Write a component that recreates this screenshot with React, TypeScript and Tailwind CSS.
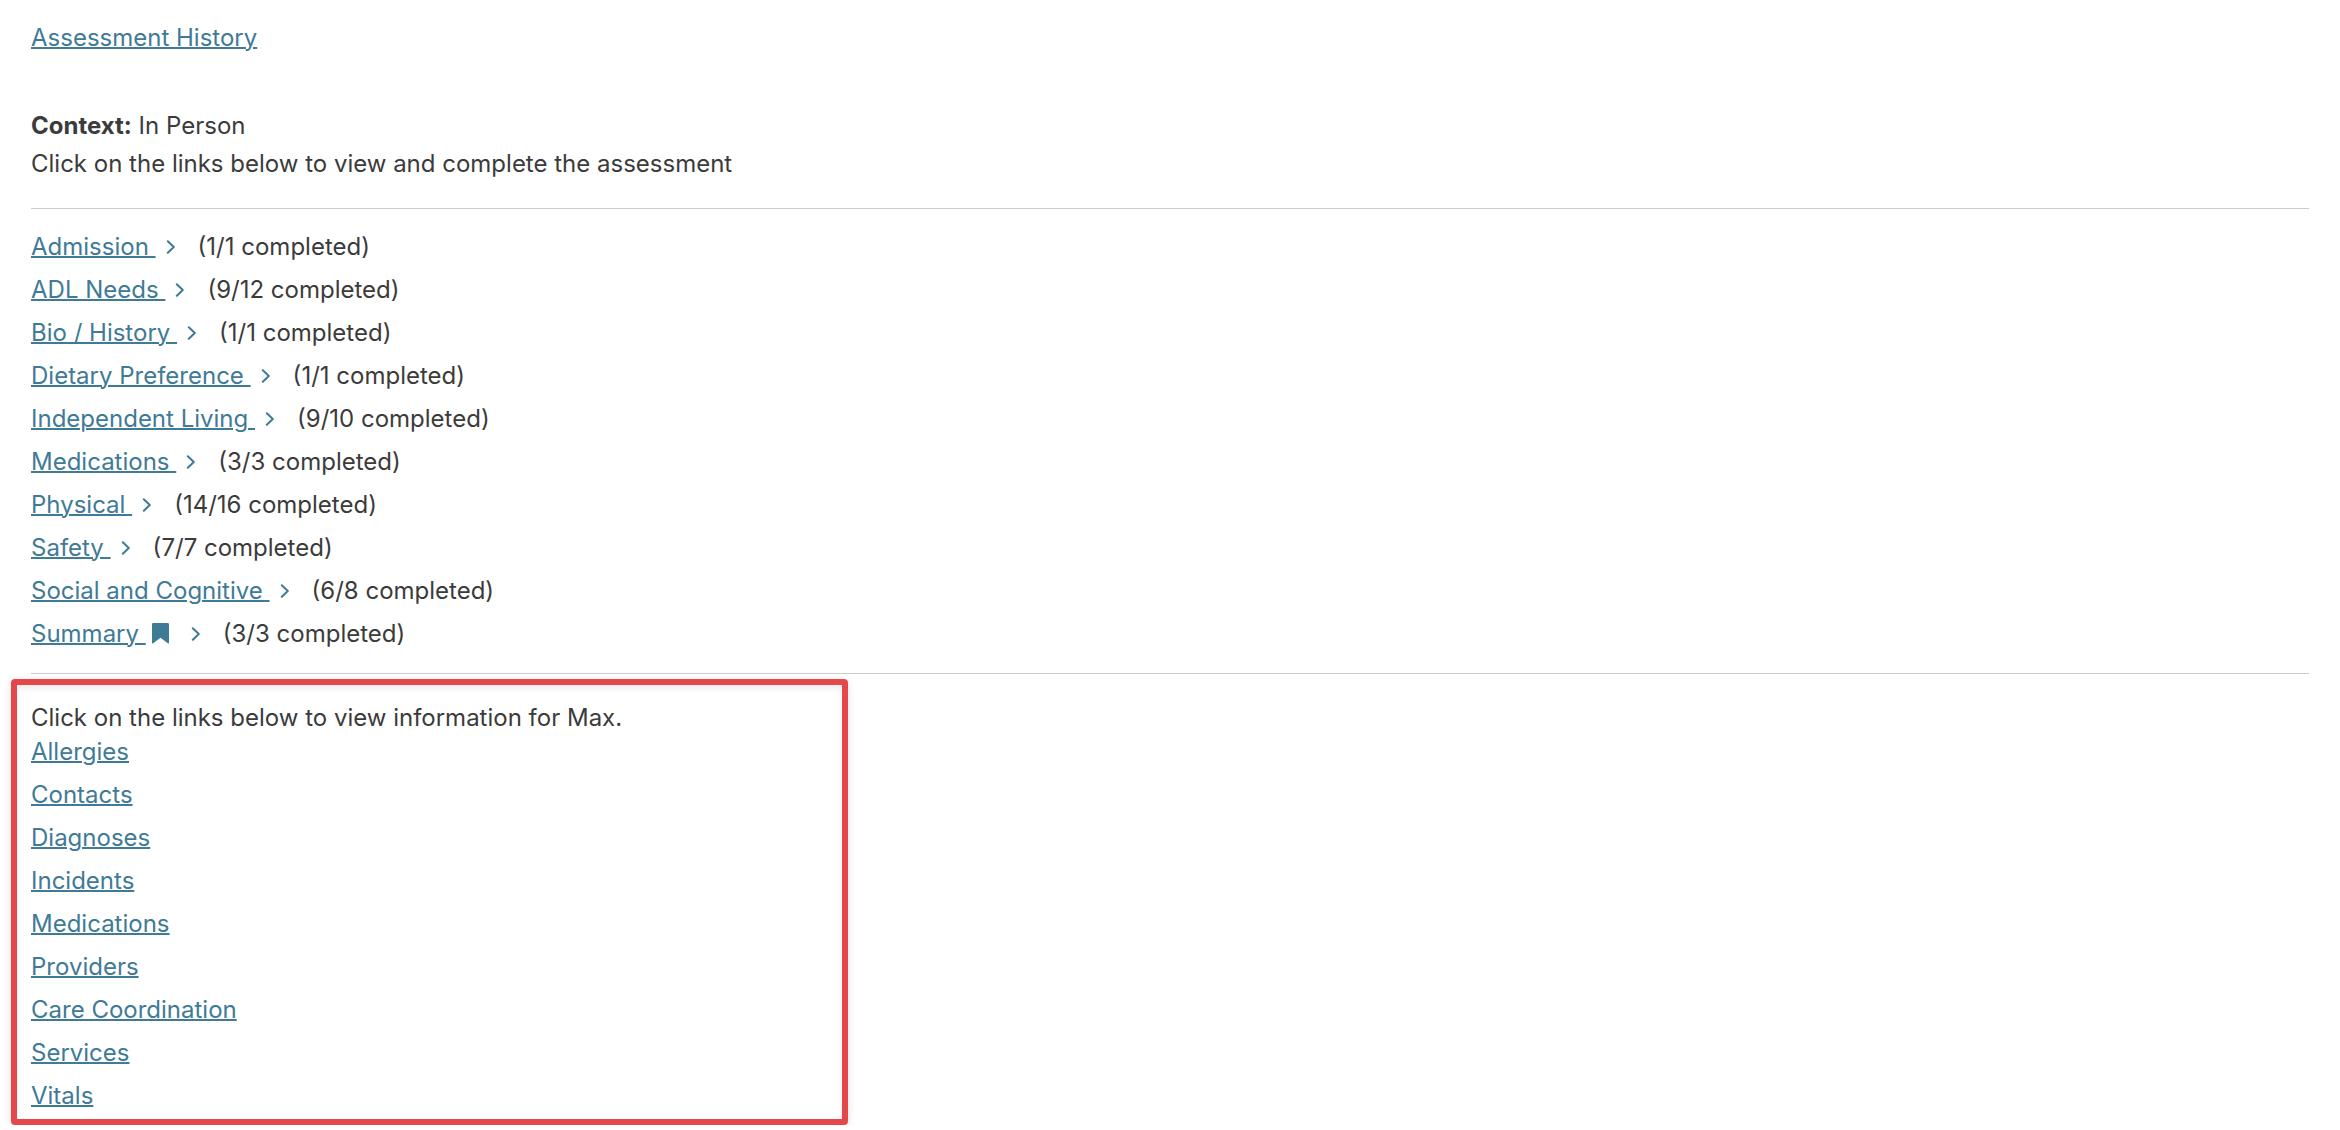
import React from 'react';

interface AssessmentSection {
  name: string;
  done: number;
  total: number;
  bookmarked?: boolean;
}

const sections: AssessmentSection[] = [
  { name: 'Admission', done: 1, total: 1 },
  { name: 'ADL Needs', done: 9, total: 12 },
  { name: 'Bio / History', done: 1, total: 1 },
  { name: 'Dietary Preference', done: 1, total: 1 },
  { name: 'Independent Living', done: 9, total: 10 },
  { name: 'Medications', done: 3, total: 3 },
  { name: 'Physical', done: 14, total: 16 },
  { name: 'Safety', done: 7, total: 7 },
  { name: 'Social and Cognitive', done: 6, total: 8 },
  { name: 'Summary', done: 3, total: 3, bookmarked: true },
];

const infoLinks = [
  'Allergies',
  'Contacts',
  'Diagnoses',
  'Incidents',
  'Medications',
  'Providers',
  'Care Coordination',
  'Services',
  'Vitals',
];

const ChevronIcon = () => (
  <svg className="h-[14px] w-[10px]" viewBox="0 0 10 14" fill="none" aria-hidden="true">
    <path d="M1.8 1.3 L7.8 7 L1.8 12.7" stroke="currentColor" strokeWidth="2" strokeLinecap="round" strokeLinejoin="round" />
  </svg>
);

const BookmarkIcon = () => (
  <svg className="ml-[6px] mr-3 h-[21px] w-[17px]" viewBox="0 0 17 21" fill="currentColor" aria-hidden="true">
    <path d="M1.4 0 H15.6 Q17 0 17 1.4 V19.6 Q17 21 15.8 20.2 L8.5 14.8 L1.2 20.2 Q0 21 0 19.6 V1.4 Q0 0 1.4 0 Z" />
  </svg>
);

const SectionRow: React.FC<{ section: AssessmentSection }> = ({ section }) => (
  <li className="flex items-center">
    <a href="#" className="flex items-center text-[#3f7a96]">
      <span className="whitespace-pre underline decoration-2">{`${section.name} `}</span>
      {section.bookmarked && <BookmarkIcon />}
      <span className="ml-[10px]">
        <ChevronIcon />
      </span>
    </a>
    <span className="ml-[22px]">({section.done}/{section.total} completed)</span>
  </li>
);

const App: React.FC = () => {
  return (
    <main className="bg-white px-[31px] pt-[19px] font-['Inter',sans-serif] text-[24px] leading-[31px] text-[#3b3b3b]">
      <p className="leading-[38px]">
        <a href="#" className="text-[#3f7a96] underline decoration-2">Assessment History</a>
      </p>

      <div className="mt-[50px] leading-[38px]">
        <p><strong className="font-bold">Context:</strong> In Person</p>
        <p>Click on the links below to view and complete the assessment</p>
      </div>

      <hr className="mt-[25px] border-[#cccccc]" />

      <ul className="mt-[22px] flex flex-col gap-3">
        {sections.map((section) => (
          <SectionRow key={section.name} section={section} />
        ))}
      </ul>

      <hr className="mt-6 border-[#cccccc]" />

      {/* Highlighted resident information */}
      <section className="-ml-5 mt-[5px] w-[837px] rounded-[4px] border-[6px] border-[#e5484b] px-[14px] pb-2 pt-[17px] shadow-[0_2px_8px_rgba(0,0,0,0.12),inset_0_3px_6px_rgba(0,0,0,0.08)]">
        <p>Click on the links below to view information for Max.</p>
        <ul className="mt-[3px] flex flex-col gap-3">
          {infoLinks.map((name) => (
            <li key={name}>
              <a href="#" className="text-[#3f7a96] underline decoration-2">{name}</a>
            </li>
          ))}
        </ul>
      </section>
    </main>
  );
};

export default App;
